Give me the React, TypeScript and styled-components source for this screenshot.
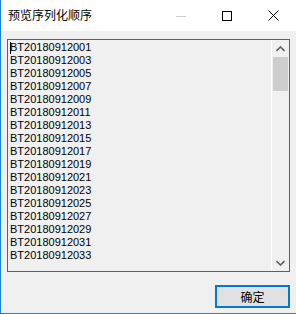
import React from "react";
import styled, { createGlobalStyle } from "styled-components";

const Global = createGlobalStyle`
  html, body { margin: 0; padding: 0; background: #ffffff; }
  #root { width: 296px; height: 314px; }
`;

const Window = styled.div`
  width: 296px;
  height: 314px;
  box-sizing: border-box;
  border-left: 1px solid #1883d7;
  border-bottom: 1px solid #1883d7;
  display: flex;
  flex-direction: column;
  background: #f0f0f0;
  font-family: "Liberation Sans", "Noto Sans CJK SC", sans-serif;
`;

const TitleBar = styled.div`
  height: 31px;
  flex: 0 0 31px;
  background: #ffffff;
  display: flex;
  align-items: center;
`;

const Title = styled.div`
  flex: 1;
  padding-left: 7px;
  font-family: "Noto Sans CJK SC", sans-serif;
  font-size: 12px;
  color: #000;
  line-height: 16px;
  margin-top: -1px;
`;

const CaptionButton = styled.div`
  width: 46px;
  height: 31px;
  display: flex;
  align-items: center;
  justify-content: center;
`;

const Content = styled.div`
  flex: 1;
  display: flex;
  flex-direction: column;
  padding: 8px 6px 0 6px;
`;

const ListBox = styled.div`
  height: 233px;
  box-sizing: border-box;
  border: 1px solid #0078d7;
  background: #f0f0f0;
  display: flex;
  overflow: hidden;
`;

const Lines = styled.div`
  flex: 1;
  padding: 1px 0 0 2px;
  position: relative;
`;

const Line = styled.div`
  font-size: 11px;
  line-height: 13px;
  height: 13px;
  color: #000;
  white-space: nowrap;
`;

const Caret = styled.span`
  position: absolute;
  left: 2px;
  top: 2px;
  width: 1px;
  height: 12px;
  background: #000;
`;

const ScrollBar = styled.div`
  width: 17px;
  border-left: 1px solid #ffffff;
  display: flex;
  flex-direction: column;
  background: #f0f0f0;
`;

const Arrow = styled.div`
  height: 17px;
  display: flex;
  align-items: center;
  justify-content: center;
`;

const Track = styled.div`
  flex: 1;
  display: flex;
  flex-direction: column;
  align-items: center;
`;

const Thumb = styled.div`
  width: 15px;
  height: 34px;
  background: #cdcdcd;
`;

const Footer = styled.div`
  display: flex;
  justify-content: flex-end;
  padding-top: 13px;
`;

const Button = styled.div`
  width: 75px;
  height: 23px;
  box-sizing: border-box;
  border: 2px solid #0078d7;
  background: #e1e1e1;
  display: flex;
  align-items: center;
  justify-content: center;
  font-family: "Noto Sans CJK SC", sans-serif;
  font-size: 12px;
  color: #000;
`;

const items = Array.from({ length: 17 }, (_, i) =>
  `BT20180912${String(2 * i + 1).padStart(3, "0")}`
);

export default function App() {
  return (
    <>
      <Global />
      <Window>
        <TitleBar>
          <Title>预览序列化顺序</Title>
          <CaptionButton>
            <svg width="10" height="10" viewBox="0 0 10 10">
              <line x1="0" y1="5.5" x2="10" y2="5.5" stroke="#cccccc" strokeWidth="1" />
            </svg>
          </CaptionButton>
          <CaptionButton>
            <svg width="10" height="10" viewBox="0 0 10 10">
              <rect x="0.5" y="0.5" width="9" height="9" fill="none" stroke="#000" strokeWidth="1" />
            </svg>
          </CaptionButton>
          <CaptionButton>
            <svg width="11" height="11" viewBox="0 0 11 11">
              <path d="M0.5 0.5 L10.5 10.5 M10.5 0.5 L0.5 10.5" stroke="#000" strokeWidth="1" />
            </svg>
          </CaptionButton>
        </TitleBar>
        <Content>
          <ListBox>
            <Lines>
              <Caret />
              {items.map((t) => (
                <Line key={t}>{t}</Line>
              ))}
            </Lines>
            <ScrollBar>
              <Arrow>
                <svg width="9" height="6" viewBox="0 0 9 6">
                  <path d="M0.5 5 L4.5 1 L8.5 5" fill="none" stroke="#606060" strokeWidth="1.6" />
                </svg>
              </Arrow>
              <Track>
                <Thumb />
              </Track>
              <Arrow>
                <svg width="9" height="6" viewBox="0 0 9 6">
                  <path d="M0.5 1 L4.5 5 L8.5 1" fill="none" stroke="#606060" strokeWidth="1.6" />
                </svg>
              </Arrow>
            </ScrollBar>
          </ListBox>
          <Footer>
            <Button>确定</Button>
          </Footer>
        </Content>
      </Window>
    </>
  );
}
